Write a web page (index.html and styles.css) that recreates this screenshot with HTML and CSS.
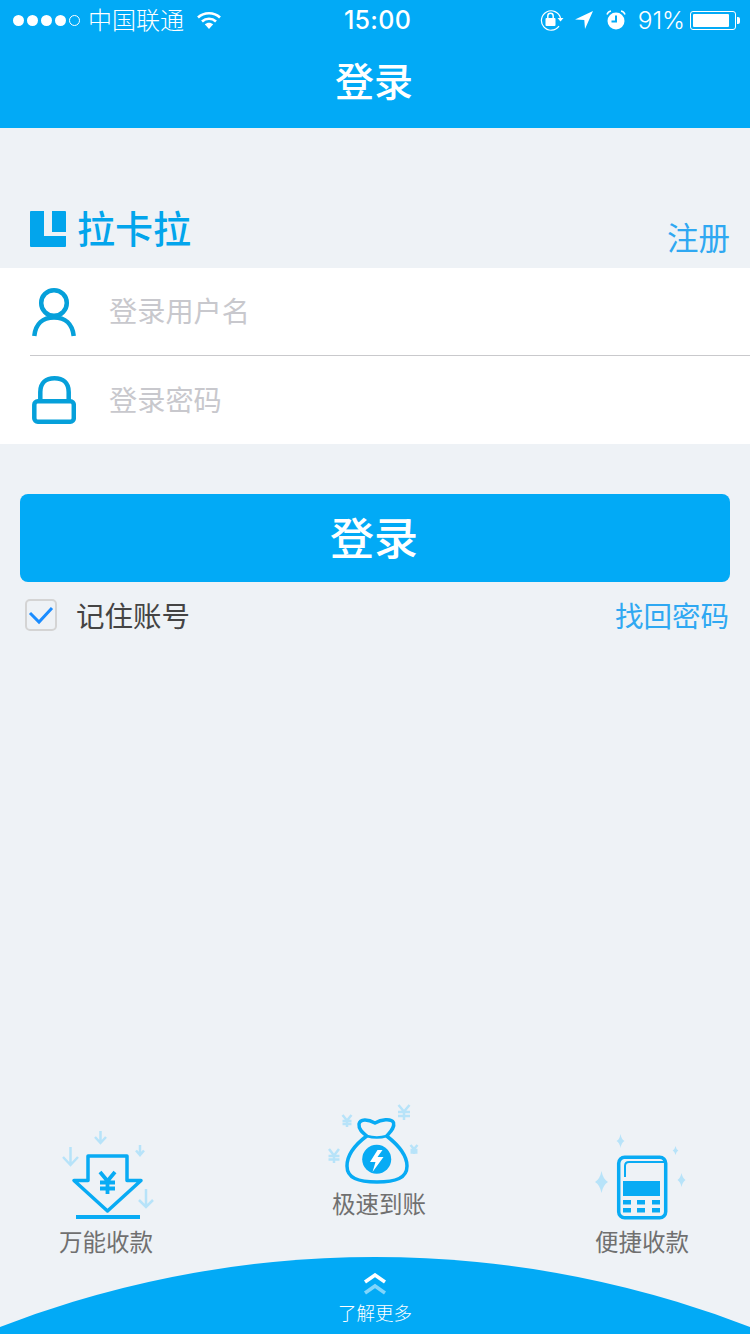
FILE: index.html
```html
<!DOCTYPE html>
<html lang="zh">
<head>
<meta charset="utf-8">
<title>登录</title>
<link rel="stylesheet" href="styles.css">
</head>
<body>
<div class="page">
  <header class="header">
    <div class="status">
      <div class="status-left">
        <div class="signal"><i class="dot"></i><i class="dot"></i><i class="dot"></i><i class="dot"></i><i class="dot dot-empty"></i></div>
        <span class="carrier">中国联通</span>
        <svg class="wifi" width="24" height="18" viewBox="0 0 24 18"><path d="M1 6.500C7 .8 17 .8 23 6.500" fill="none" stroke="#fff" stroke-width="2.600"/><path d="M5 10.500c4-3.700 10-3.700 14 0" fill="none" stroke="#fff" stroke-width="2.600"/><path d="M7.800 13.200c2.400-2.100 6-2.100 8.400 0L12 18z" fill="#fff"/></svg>
      </div>
      <div class="time">15:00</div>
      <div class="status-right">
        <svg class="st-lock" width="24" height="22" viewBox="0 0 24 22"><path d="M20.500 9A9.700 9.700 0 1 0 19 17.200" fill="none" stroke="#fff" stroke-width="1.200"/><path d="M17.500 9h6l-3 3.500z" fill="#fff"/><rect x="5.500" y="9" width="10" height="8" rx="1" fill="#fff"/><path d="M7.800 9V7a2.700 2.700 0 0 1 5.400 0v2" fill="none" stroke="#fff" stroke-width="1.500"/></svg>
        <svg class="st-arrow" width="18" height="18" viewBox="0 0 18 18"><path d="M18 0L0 8.500l9.300.5.700 9z" fill="#fff"/></svg>
        <svg class="st-alarm" width="20" height="20" viewBox="0 0 20 20"><circle cx="10" cy="11" r="8.500" fill="#fff"/><path d="M10 5.500V11.500H5.500" fill="none" stroke="#02aaf6" stroke-width="2"/><path d="M1 4.500Q2 1.500 5 1M19 4.500Q18 1.500 15 1" fill="none" stroke="#fff" stroke-width="1.500"/></svg>
        <span class="battery-text">91%</span>
        <div class="battery"><div class="battery-body"><div class="battery-fill"></div></div><div class="battery-nub"></div></div>
      </div>
    </div>
    <h1 class="nav-title">登录</h1>
  </header>

  <main class="main">
    <div class="brand">
      <div class="logo">
        <svg width="36" height="36" viewBox="0 0 36 36"><path d="M1 0H14V25H36V35a1 1 0 0 1-1 1H1a1 1 0 0 1-1-1V1a1 1 0 0 1 1-1z" fill="#02a5ec"/><path d="M22 0H35a1 1 0 0 1 1 1V21H22z" fill="#02a5ec"/></svg>
        <span class="logo-text">拉卡拉</span>
      </div>
      <a class="register">注册</a>
    </div>

    <section class="form">
      <div class="row row-user">
        <svg class="row-icon" width="46" height="50" viewBox="0 0 46 50"><circle cx="24" cy="16" r="12.800" fill="none" stroke="#06a0da" stroke-width="4.500"/><path d="M4.300 49C5.500 37 13 30.500 24 30.500S42.500 37 43.700 49" fill="none" stroke="#06a0da" stroke-width="4.500"/></svg>
        <span class="placeholder">登录用户名</span>
      </div>
      <div class="row">
        <svg class="row-icon" width="46" height="50" viewBox="0 0 46 50"><path d="M10.300 27V17C10.300 8 16 3.300 24.500 3.300S38.700 8 38.700 17v10" fill="none" stroke="#06a0da" stroke-width="4.500"/><rect x="4.300" y="26.300" width="39.500" height="20.500" rx="3.500" fill="#fff" stroke="#06a0da" stroke-width="4.500"/></svg>
        <span class="placeholder">登录密码</span>
      </div>
    </section>

    <button class="login-btn" type="button">登录</button>

    <div class="options">
      <label class="remember">
        <span class="checkbox"><svg width="26" height="20" viewBox="0 0 26 20"><path d="M2 8l9 9L24 3" fill="none" stroke="#1a8cff" stroke-width="3"/></svg></span>
        <span class="remember-text">记住账号</span>
      </label>
      <a class="forgot">找回密码</a>
    </div>

    <div class="features">
      <div class="feat feat-left">
        <svg class="feat-icon icon-left" width="104" height="101" viewBox="54 1126 104 101">
          <g fill="none" stroke="#b7e3f9" stroke-width="2.500">
            <path d="M70.500 1147V1165M63 1157l7.500 8 7.500-8"/>
            <path d="M100.500 1131V1143M95 1137l5.500 6 5.500-6"/>
            <path d="M140 1145V1155M136 1150.500l4 4.500 4-4.500"/>
            <path d="M146 1189V1207M139 1200l7 7 7-7"/>
          </g>
          <path d="M88 1156H127V1180.500H141L107.500 1211 74 1180.500H88z" fill="none" stroke="#08abf4" stroke-width="3.500" stroke-linejoin="round"/>
          <rect x="76" y="1215" width="64" height="4" fill="#08abf4"/>
          <path d="M100 1172l7.500 9 7.500-9M107.500 1181V1194M100 1182.500H115M100 1188.500H115" fill="none" stroke="#08abf4" stroke-width="3.800"/>
        </svg>
        <div class="feat-label">万能收款</div>
      </div>
      <div class="feat feat-mid">
        <svg class="feat-icon" width="104" height="89" viewBox="327 1100 104 89">
          <g fill="none" stroke="#b7e3f9" stroke-width="2.500">
            <path d="M398.500 1105l5.500 6.500 5.500-6.500M404 1111V1120M398 1112H410M398 1116H410"/>
            <path d="M342.500 1115l4.500 5.500 4.500-5.500M347 1120V1127M342.500 1121H351.500M342.500 1124H351.500"/>
            <path d="M329 1149l5 6.500 5-6.500M334 1155V1163M328.500 1156H339.500M328.500 1159.500H339.500"/>
            <path d="M410.500 1145l3.500 4 3.500-4M414 1149V1154M410.500 1150H417.500M410.500 1152.500H417.500"/>
          </g>
          <path d="M366.700 1136C362 1132 358.500 1129 359 1124C360 1118.500 368 1119 375 1123C381 1119.500 391 1118 393.500 1122.500C395 1128 390 1132 386.700 1136C397 1144 407 1155 407 1166C407 1178 396 1182 377 1182C358 1182 347 1178 347 1166C347 1155 356 1144 366.700 1136Z" fill="none" stroke="#08abf4" stroke-width="3.500" stroke-linejoin="round"/>
          <path d="M366.700 1136Q377 1139 386.700 1136" fill="none" stroke="#08abf4" stroke-width="2.500"/>
          <circle cx="376.700" cy="1159.300" r="14.500" fill="#08abf4"/>
          <path d="M377.500 1150H382.500L377.500 1157H383.500L372.500 1172L375.500 1162H370z" fill="#fff"/>
        </svg>
        <div class="feat-label">极速到账</div>
      </div>
      <div class="feat feat-right">
        <svg class="feat-icon" width="104" height="93" viewBox="590 1134 104 93">
          <g fill="#b7e3f9">
            <path d="M620.500 1134q1 5.500 4 7-3 1.500-4 7-1-5.500-4-7 3-1.500 4-7z"/>
            <path d="M675.500 1146q.7 3.500 2.800 4.500-2.100 1-2.800 4.500-.7-3.500-2.800-4.500 2.100-1 2.800-4.500z"/>
            <path d="M601.500 1171q1.500 8 6.500 11-5 3-6.500 11-1.500-8-6.500-11 5-3 6.500-11z"/>
            <path d="M681.500 1173q1 5 4 7-3 2-4 7-1-5-4-7 3-2 4-7z"/>
          </g>
          <rect x="618.700" y="1157.200" width="47" height="60.500" rx="6" fill="none" stroke="#08abf4" stroke-width="3.500"/>
          <path d="M625 1177V1166Q625 1162 629 1162H664" fill="none" stroke="#08abf4" stroke-width="2"/>
          <rect x="623" y="1181" width="37" height="15" fill="#08abf4"/>
          <g fill="#08abf4">
            <rect x="623" y="1200" width="8" height="4.500"/><rect x="637" y="1200" width="8" height="4.500"/><rect x="652" y="1200" width="8" height="4.500"/>
            <rect x="623" y="1208" width="8" height="4.500"/><rect x="637" y="1208" width="8" height="4.500"/><rect x="652" y="1208" width="8" height="4.500"/>
          </g>
        </svg>
        <div class="feat-label">便捷收款</div>
      </div>
    </div>
  </main>

  <footer class="footer">
    <svg class="chevrons" width="24" height="22" viewBox="0 0 24 22"><path d="M2 9l10-7 10 7" fill="none" stroke="#fff" stroke-width="3.500"/><path d="M2 20l10-7 10 7" fill="none" stroke="#fff" stroke-opacity=".5" stroke-width="3.500"/></svg>
    <div class="more">了解更多</div>
  </footer>
</div>
</body>
</html>
```

FILE: styles.css
```css
* { box-sizing: border-box; }
html, body { margin: 0; padding: 0; }
body {
  width: 750px;
  height: 1334px;
  overflow: hidden;
  background: #eef2f6;
  font-family: "Noto Sans CJK SC", "Noto Sans", sans-serif;
}
.page { width: 750px; height: 1334px; display: flex; flex-direction: column; }

.header { height: 128px; background: #02aaf6; color: #fff; flex: none; }
.status {
  height: 40px;
  padding: 0 10px 0 13px;
  display: flex;
  align-items: center;
  justify-content: space-between;
}
.status-left, .status-right { display: flex; align-items: center; width: 280px; }
.status-right { justify-content: flex-end; }
.signal { display: flex; gap: 3px; }
.dot { width: 11px; height: 11px; border-radius: 50%; background: #fff; display: block; }
.dot-empty { background: none; border: 1px solid #fff; }
.carrier { margin-left: 8px; font-size: 24px; font-weight: 300; line-height: 38px; height: 40px; }
.wifi { margin-left: 13px; }
.time { margin-left: 2px; font-family: "Inter", "Liberation Sans", sans-serif; font-size: 25px; font-weight: 500; letter-spacing: .3px; }
.st-lock { margin-right: 11px; }
.st-arrow { margin-right: 13px; }
.st-alarm { margin-right: 12px; }
.battery-text { font-family: "Inter", "Liberation Sans", sans-serif; font-size: 24.500px; font-weight: 300; margin-right: 5px; }
.battery { display: flex; align-items: center; }
.battery-body { width: 46px; height: 19px; border: 1px solid #fff; border-radius: 3px; padding: 2px; }
.battery-fill { width: 91%; height: 100%; background: #fff; border-radius: 1px; }
.battery-nub { width: 3px; height: 7px; background: #fff; margin-left: 1px; border-radius: 0 2px 2px 0; }
.nav-title { margin: 0 0 0 -2px; height: 88px; font-size: 39px; font-weight: 500; line-height: 78px; text-align: center; }

.main { flex: 1; display: flex; flex-direction: column; }
.brand { height: 140px; padding: 0 20px 0 30px; display: flex; justify-content: space-between; align-items: flex-end; }
.logo { display: flex; align-items: center; gap: 11px; margin-bottom: 19px; }
.logo svg { display: block; }
.logo-text { font-size: 38px; font-weight: 500; line-height: 36px; padding-bottom: 4px; color: #02a5ec; }
.register { font-size: 31.500px; line-height: 40px; margin-bottom: 12px; color: #2fa8f2; }

.form { background: #fff; padding-left: 30px; }
.row { height: 88px; display: flex; align-items: center; }
.row-user { border-bottom: 1px solid #c9c9cc; }
.row-icon { flex: none; display: block; }
.placeholder { margin: 0 0 4px 33px; font-size: 28.200px; color: #c8c8cd; }

.login-btn {
  display: block;
  margin: 50px 20px 0;
  width: 710px;
  height: 88px;
  padding: 0 2px 4px 0;
  border: 0;
  border-radius: 8px;
  background: #02aaf6;
  color: #fff;
  font-family: inherit;
  font-size: 44px;
  font-weight: 500;
}

.options { margin-top: 10px; padding: 0 21px 0 25px; display: flex; justify-content: space-between; align-items: center; height: 44px; }
.remember { display: flex; align-items: center; gap: 19px; font-size: 28.500px; color: #444; }
.checkbox { width: 32px; height: 32px; margin-top: 2px; border: 2px solid #d4d4d4; border-radius: 5px; display: flex; align-items: center; justify-content: center; }
.forgot { font-size: 28.500px; color: #2fa8f2; }

.features { margin-top: auto; height: 157px; display: flex; align-items: flex-start; }
.feat { width: 104px; flex: none; }
.feat-left { margin-left: 54px; padding-top: 26px; }
.feat-mid { margin-left: 169px; }
.feat-right { margin-left: 159px; padding-top: 34px; }
.feat-icon { display: block; }
.feat-label { font-size: 23.500px; line-height: 28px; color: #707070; text-align: center; white-space: nowrap; }

.footer {
  flex: none;
  height: 77px;
  background: #02aaf6;
  clip-path: circle(1040px at 375px 1040px);
  color: #fff;
  display: flex;
  flex-direction: column;
  align-items: center;
  padding-top: 16px;
}
.chevrons { display: block; }
.more { font-size: 18.500px; line-height: 26px; margin-top: 4px; font-weight: 300; }
```
